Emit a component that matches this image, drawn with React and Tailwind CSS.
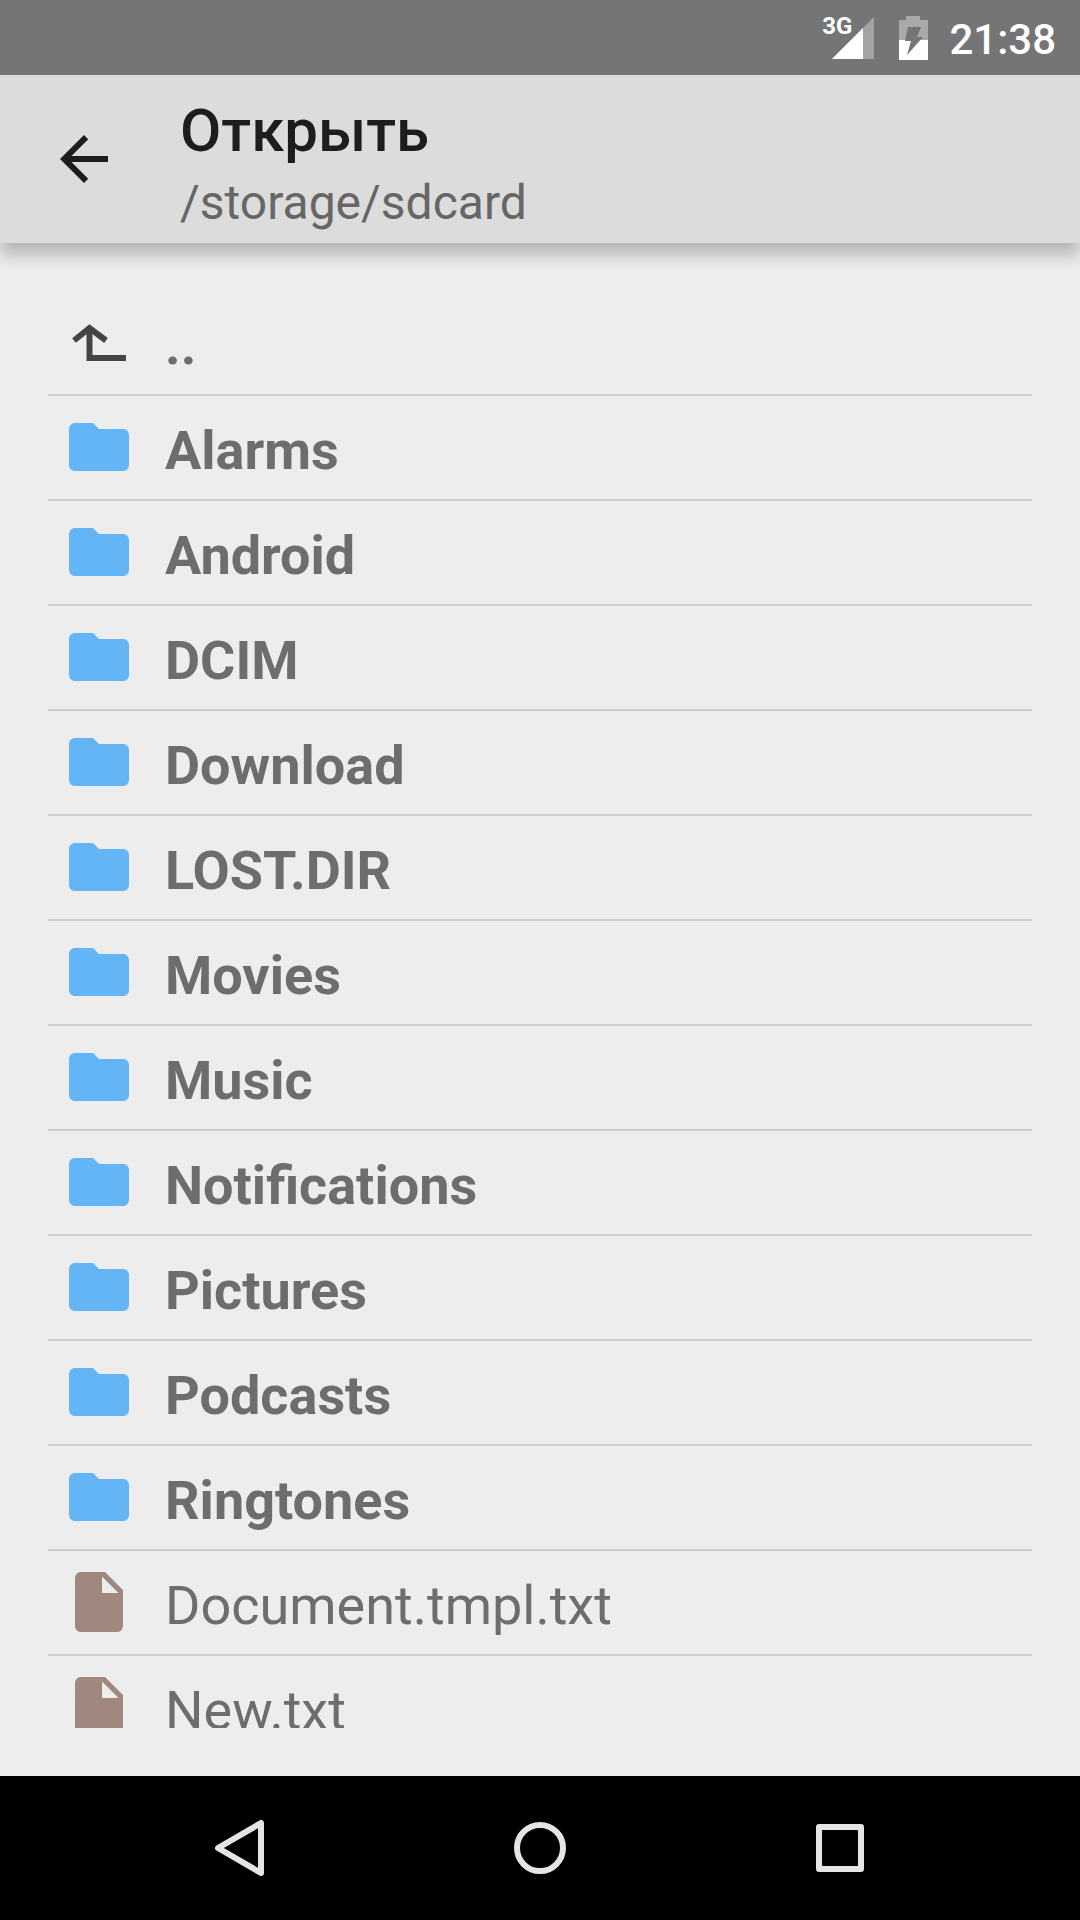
import { useState } from "react";
import { MdArrowBack, MdFolder, MdInsertDriveFile } from "react-icons/md";

const folders = [
  "Alarms",
  "Android",
  "DCIM",
  "Download",
  "LOST.DIR",
  "Movies",
  "Music",
  "Notifications",
  "Pictures",
  "Podcasts",
  "Ringtones",
];

const files = ["Document.tmpl.txt", "New.txt"];

const entries = [
  { name: "..", type: "up" },
  ...folders.map((name) => ({ name, type: "folder" })),
  ...files.map((name) => ({ name, type: "file" })),
];

function UpIcon() {
  return (
    <svg
      viewBox="0 0 72 72"
      className="mb-0.5 size-18 shrink-0 text-[#444444]"
      fill="none"
      stroke="currentColor"
      strokeWidth="6"
      aria-hidden="true"
    >
      <path d="M11 34.5 26.5 22 43 34.5" />
      <path d="M26.5 23V52H63" />
    </svg>
  );
}

function EntryIcon({ type }) {
  if (type === "up") return <UpIcon />;
  if (type === "folder")
    return <MdFolder className="mb-0.5 size-18 shrink-0 text-[#64b5f6]" />;
  return (
    <MdInsertDriveFile className="mb-0.5 size-18 shrink-0 text-[#a1887f]" />
  );
}

function StatusBar() {
  return (
    <div className="flex h-[75px] shrink-0 items-center justify-end bg-[#757575] pr-6 text-white">
      <span className="mb-6 text-[24px] leading-6 font-bold">3G</span>
      <svg viewBox="0 0 42 42" className="-ml-5 size-[42px]" aria-hidden="true">
        <path d="M42 0V42H0z" fill="#a3a3a3" />
        <path d="M31 11V42H0z" fill="#ffffff" />
      </svg>
      <svg
        viewBox="0 0 29 44"
        className="ml-[25px] h-11 w-[29px]"
        aria-hidden="true"
      >
        <path d="M0 4H7V0H21V4H29V24H0z" fill="#a9a9a9" />
        <path d="M0 24H29V44H0z" fill="#ffffff" />
        <path d="M9 11H22L18 21H24L8 39L12 25H6z" fill="#757575" />
      </svg>
      <span className="ml-[21px] pt-1 text-[42px] leading-[50px] font-medium">
        21:38
      </span>
    </div>
  );
}

function AppBar({ title, path }) {
  return (
    <header className="relative z-10 flex h-[168px] shrink-0 items-center bg-[#dcdcdc] pl-12 shadow-[0_12px_16px_rgba(0,0,0,0.24)]">
      <button type="button" aria-label="Назад" className="text-[#1d1d1d]">
        <MdArrowBack className="size-18" />
      </button>
      <div className="ml-15 pt-4">
        <h1 className="text-[60px] leading-[72px] font-medium text-[#1d1d1d]">
          {title}
        </h1>
        <p className="text-[48px] leading-[72px] text-[#666666]">{path}</p>
      </div>
    </header>
  );
}

function FileList({ selected, onSelect }) {
  return (
    <main className="min-h-0 flex-1 p-12">
      <ul className="h-full divide-y-2 divide-[#cecece] overflow-hidden">
        {entries.map(({ name, type }) => (
          <li key={name}>
            <button
              type="button"
              aria-pressed={selected === name}
              onClick={() => onSelect(name)}
              className="flex h-[103px] w-full items-center gap-[30px] pl-[15px] text-left text-[54px] leading-[64px] text-[#6d6d6d]"
            >
              <EntryIcon type={type} />
              <span
                className={type === "file" ? "pt-1.5" : "pt-1.5 font-bold"}
              >
                {name}
              </span>
            </button>
          </li>
        ))}
      </ul>
    </main>
  );
}

function NavButton({ label, children }) {
  return (
    <button
      type="button"
      aria-label={label}
      className="flex flex-1 items-center justify-center"
    >
      <svg
        viewBox="0 0 60 60"
        className="size-15"
        fill="none"
        stroke="currentColor"
        strokeWidth="6"
        strokeLinejoin="round"
      >
        {children}
      </svg>
    </button>
  );
}

function NavBar() {
  return (
    <nav className="flex h-36 shrink-0 bg-black px-[8.333%] text-[#e5e5e5]">
      <NavButton label="Назад">
        <path d="M51 5V55L8 30z" />
      </NavButton>
      <NavButton label="Домой">
        <circle cx="30" cy="30" r="23" />
      </NavButton>
      <NavButton label="Недавние">
        <path d="M9 9H51V51H9z" />
      </NavButton>
    </nav>
  );
}

export default function App() {
  const [selected, setSelected] = useState(null);

  return (
    <div className="flex h-screen flex-col bg-[#ededed] font-[Roboto,sans-serif]">
      <StatusBar />
      <AppBar title="Открыть" path="/storage/sdcard" />
      <FileList selected={selected} onSelect={setSelected} />
      <NavBar />
    </div>
  );
}
